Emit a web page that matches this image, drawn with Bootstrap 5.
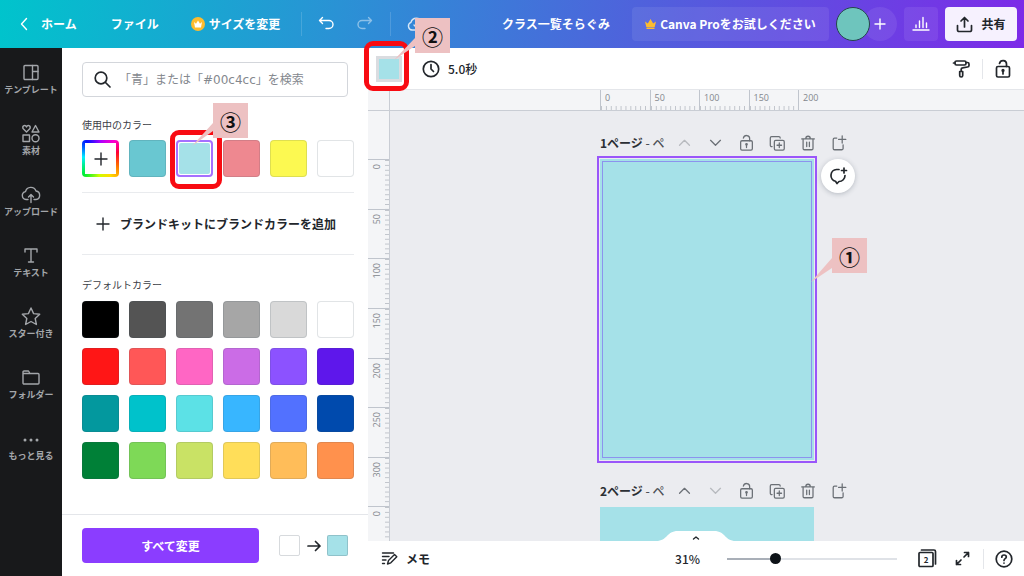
<!DOCTYPE html>
<html lang="ja">
<head>
<meta charset="utf-8">
<meta name="viewport" content="width=device-width, initial-scale=1">
<title>クラス一覧そらぐみ</title>
<link rel="stylesheet" href="https://cdn.jsdelivr.net/npm/bootstrap@5.3.0/dist/css/bootstrap.min.css">
<style>
  :root { --aqua:#a5e1e8; --violet:#8b3dff; --ink:#22262b; --line:#e4e6ea; }
  body { font:12px/16px "Noto Sans CJK JP",sans-serif; color:var(--ink); }
  button { padding:0; border:0; background:none; color:inherit; display:inline-flex; align-items:center; justify-content:center; flex:none; }
  a { color:inherit; text-decoration:none; }
  svg { fill:none; stroke:currentColor; stroke-width:1.4; stroke-linecap:round; stroke-linejoin:round; flex:none; display:block; overflow:visible; }
  svg.solid { stroke:none; }
  svg.thick { stroke-width:1.7; }
  .rule { width:1px; background:var(--line); }

  .topbar { height:48px; background:linear-gradient(100deg,#00c4cc 0%,#2a92d5 33%,#4f62dc 62%,#7d2ae8 100%); color:#fff; padding:0 7px 0 20px; }
  .topbar .rule { height:24px; background:#ffffff26; }
  .home-link { gap:13px; margin-right:34px; }
  .resize-btn { gap:4px; margin:0 21px 0 32px; }
  .redo-btn { opacity:.45; margin:0 17px 0 23px; }
  .pro-btn { height:34px; width:197px; background:#ffffff14; border-radius:4px; gap:4px; margin:0 7px 0 22px; }
  .avatar { width:34px; height:34px; border:1px solid #25444c; border-radius:50%; background:#6ec5bd; z-index:1; }
  .invite-btn { width:34px; height:34px; border-radius:50%; background:#ffffff14; margin:0 7px 0 -7px; }
  .chart-btn { width:34px; height:34px; border-radius:4px; background:#ffffff14; margin-right:7px; }
  .share-btn { width:72px; height:34px; border-radius:4px; background:#f6f1fe; color:var(--ink); gap:8px; }

  .side-nav { width:62px; background:#18191b; color:#a3a6aa; padding-top:15px; }
  .side-nav a { height:61px; font-size:9px; line-height:12px; gap:1px; font-weight:700; white-space:nowrap; }
  .side-nav svg { width:20px; height:20px; }

  .color-panel { width:306px; }
  .panel-body { padding:14px 14px 0 20px; }
  .search-box { height:35px; margin-right:6px; border:1px solid #d3d6db; border-radius:4px; padding:0 11px; gap:8px; }
  .search-box input { border:0; outline:0; width:100%; padding:0; background:none; color:var(--ink); font-family:"DejaVu Sans","Noto Sans CJK JP",sans-serif; }
  .search-box input::placeholder { color:#84888e; opacity:1; }
  .panel-title { font-size:10px; line-height:16px; margin:0; font-weight:400; color:#3c4046; }
  .swatches { display:grid; grid-template-columns:repeat(6,1fr); gap:10px; }
  .swatch { width:100%; height:37px; border-radius:4px; border:1px solid #39475526; background-color:var(--c); position:relative; }
  .swatch.picker { border:0; background:conic-gradient(#a0f,#f0c 40deg,#f03 70deg,#f60 110deg,#fd0 150deg,#cf0 185deg,#0e3 225deg,#0ef 275deg,#01f 320deg,#a0f); }
  .picker span { background:#fff; width:31px; height:31px; }
  .swatch.chosen { border:2px solid #a570ff; padding:1px; background:none; }
  .chosen .fill { width:100%; height:100%; background:var(--aqua); border-radius:2px; }
  .brand-btn { height:63px; gap:10px; font-weight:600; border:solid #e9ebee; border-width:1px 0; margin:15px 0 22px; width:100%; }
  .brand-btn svg { margin-left:-4px; }
  .panel-foot { height:62px; border-top:1px solid var(--line); padding:0 20px; }
  .apply-btn { width:177px; height:35px; background:var(--violet); color:#fff; border-radius:4px; font-weight:700; margin-right:20px; }
  .chip { width:21px; height:21px; border:1px solid #39475533; border-radius:2px; }
  .chip.after { background:var(--aqua); }

  .editor { min-width:0; z-index:2; }
  .toolbar { height:41px; padding:0 11px 0 8px; }
  .toolbar .rule { height:20px; margin:0 10px 0 12px; }
  .page-color { width:26px; height:26px; border:3px solid #dadce0; background:var(--aqua); position:relative; margin-right:20px; }
  .ruler { background:#f4f5f7; color:#83878d; font:9px/12px "Open Sans",sans-serif; }
  .ruler-x { height:22px; border-top:1px solid var(--line); border-bottom:1px solid #c9cdd4; }
  .ruler-y { width:22px; border-right:1px solid #c9cdd4; padding-top:48px; overflow:hidden; }
  .corner { width:22px; border-right:1px solid #c9cdd4; }
  .track-x { width:214px; display:grid; grid-template-columns:repeat(4,1fr) 16px; }
  .track-x span { border-left:1px solid #c0c5cd; padding:2px 0 0 4px; background:linear-gradient(to right,#c0c4cb 1px,transparent 1px) 0 100%/10% 4px repeat-x; }
  .track-x span:last-child { background:none; }
  .track-y { height:397px; display:grid; grid-template-rows:repeat(8,1fr); }
  .track-y span { display:flex; align-items:flex-start; border-top:1px solid #c0c5cd; padding:4px 0 0 3px; background:linear-gradient(#c0c4cb 1px,transparent 1px) 100% 0/4px 10% repeat-y; }
  .track-y b { font-weight:400; writing-mode:vertical-rl; transform:rotate(180deg); }

  .stage { background:#ebecf0; overflow:hidden; padding-top:16px; }
  .sheet-col { width:214px; margin:0 auto; }
  .sheet-head { height:32px; width:max-content; color:#6b7076; }
  .sheet-name { width:66px; white-space:nowrap; font-weight:500; color:#4d5157; margin-right:9px; }
  .sheet-name b { color:#2b2f34; font-weight:700; }
  .sheet-tools { gap:12px; }
  .sheet-tools svg { width:19px; height:18px; }
  .sheet-tools :disabled { opacity:.4; }
  .sheet { background:var(--aqua); height:301px; margin-bottom:15px; position:relative; }
  .sheet.active { outline:2px solid #9a56fa; outline-offset:1px; }
  .guide { position:absolute; inset:2px; border:1px solid #8c93ee; }
  .comment-btn { position:absolute; left:221px; top:0; width:34px; height:34px; border-radius:50%; background:#fff; box-shadow:0 1px 5px #3947554d; }

  .statusbar { height:35px; padding:0 11px 0 13px; position:relative; z-index:1; }
  .statusbar .rule { height:20px; margin-right:11px; }
  .drawer-tab { position:absolute; left:50%; top:-10px; margin-left:-36px; width:72px; height:14px; }
  .zoom { appearance:none; width:170px; height:16px; background:linear-gradient(to right,#a9afb8 28%,#dfe2e7 28%) center/100% 2px no-repeat; margin:0 21px 0 27px; }
  .zoom::-webkit-slider-thumb { appearance:none; width:11px; height:11px; border-radius:50%; background:#0e1318; }
  .full-btn { margin:0 13px 0 19px; }

  .marker { position:absolute; border:5px solid #f80b12; border-radius:9px; pointer-events:none; }
  .callout { position:absolute; width:35px; height:35px; background:#edc1c2; color:#111; font-size:21px; line-height:37px; font-weight:700; text-align:center; z-index:5; }
  .callout svg { position:absolute; left:0; top:0; fill:#edc1c2; stroke:none; width:1px; height:1px; }
</style>
</head>
<body class="vh-100 d-flex flex-column overflow-hidden">

<svg class="d-none">
  <symbol id="up" viewBox="0 0 20 20"><path d="M4.500 12.500 10 7l5.500 5.500"/></symbol>
  <symbol id="down" viewBox="0 0 20 20"><path d="m4.500 7 5.500 5.500L15.500 7"/></symbol>
  <symbol id="lock" viewBox="0 0 20 20"><rect x="3.500" y="7.500" width="13" height="10.500" rx="1.500"/><path d="M6.500 4.500C7.500 .5 13.500 .8 13.500 5v2.500M10 12v3"/><circle cx="10" cy="11.500" r=".8" fill="currentColor"/></symbol>
  <symbol id="copy" viewBox="0 0 20 20"><rect x="6.500" y="7" width="11" height="11" rx="1.500"/><path d="M4 14h-.5A1.500 1.500 0 0 1 2 12.500v-8A1.500 1.500 0 0 1 3.500 3h8A1.500 1.500 0 0 1 13 4.500M12 10v5M9.500 12.500h5"/></symbol>
  <symbol id="trash" viewBox="0 0 20 20"><path d="M2.500 5.500h14M4 5.500v10.500a1.500 1.500 0 0 0 1.500 1.500h8a1.500 1.500 0 0 0 1.500-1.500V5.500M7 5.500c0-4 5-4 5 0M8 9v5M11 9v5"/></symbol>
  <symbol id="add" viewBox="0 0 20 20"><path d="M7 4.500H4.500A1.500 1.500 0 0 0 3 6v10a1.500 1.500 0 0 0 1.500 1.500h8A1.500 1.500 0 0 0 14 16v-4M13 2v8M9 6h8"/></symbol>
</svg>

<header class="topbar d-flex align-items-center fw-bold text-nowrap flex-shrink-0">
  <a href="#" class="home-link d-flex align-items-center"><svg width="8" height="14" viewBox="0 0 8 14"><path d="M6.500 1.500 1.500 7l5 5.500"/></svg>ホーム</a>
  <a href="#">ファイル</a>
  <button class="resize-btn fw-bold"><svg class="solid" width="14" height="14" viewBox="0 0 14 14"><circle cx="7" cy="7" r="7" fill="#fdbc2e"/><path d="M3 5l2 1.700L7 3.500l2 3.200L11 5l-1 5.500H4z" fill="#fff"/></svg>サイズを変更</button>
  <span class="rule"></span>
  <button class="ms-3" aria-label="元に戻す"><svg width="16" height="16" viewBox="0 0 16 16"><path d="M4.500 1.500 1.500 4.500l3 3M1.500 4.500H11a4 4 0 0 1 0 8H8"/></svg></button>
  <button class="redo-btn" aria-label="やり直す"><svg width="16" height="16" viewBox="0 0 16 16"><path d="m11.500 1.500 3 3-3 3M14.500 4.500H5a4 4 0 0 0 0 8h3"/></svg></button>
  <span class="rule"></span>
  <svg class="ms-3" width="20" height="16" viewBox="0 0 20 16" opacity=".8"><path d="M5 14a4 4 0 0 1-1-7.700A5.500 5.500 0 0 1 14.500 6 4 4 0 0 1 15 14zM7 9l2.500 2.500L13 8"/></svg>
  <span class="ms-auto">クラス一覧そらぐみ</span>
  <button class="pro-btn fw-bold"><svg class="solid" width="11" height="10" viewBox="0 0 11 10"><path d="M0 2.500l2.800 2L5.500 0l2.700 4.500 2.800-2L9.700 8H1.300zM1.500 8.500h8V10h-8z" fill="#fdbc2e"/></svg>Canva Proをお試しください</button>
  <span class="avatar"></span>
  <button class="invite-btn" aria-label="招待"><svg width="12" height="12" viewBox="0 0 12 12"><path d="M6 1v10M1 6h10"/></svg></button>
  <button class="chart-btn" aria-label="分析"><svg width="18" height="16" viewBox="0 0 18 16"><path d="M1 14h16M4 11.500V9M7.500 11.500V5M11 11.500V1.500M14.500 11.500V7"/></svg></button>
  <button class="share-btn fw-bold"><svg class="thick" width="17" height="17" viewBox="0 0 17 17"><path d="M1.500 9.500V14A1.500 1.500 0 0 0 3 15.500h11a1.500 1.500 0 0 0 1.500-1.500V9.500M8.500 11V1.500M5 5l3.500-3.500L12 5"/></svg>共有</button>
</header>

<div class="d-flex flex-fill" style="min-height:0">
  <nav class="side-nav d-flex flex-column flex-shrink-0">
    <a href="#" class="d-flex flex-column align-items-center"><svg viewBox="0 0 20 20"><rect x="3" y="2.500" width="14" height="14" rx="1"/><path d="M11.500 2.500v14M11.500 8.500H17"/></svg>テンプレート</a>
    <a href="#" class="d-flex flex-column align-items-center"><svg viewBox="0 0 20 20"><path d="M5.500 8 2 4.500c-1-3 2.500-4 3.500-1.500C6.500.5 10 1.500 9 4.500zM14.500 1.500 18 8h-7z"/><rect x="2" y="11" width="6.500" height="6.500"/><circle cx="14.500" cy="14.200" r="3.500"/></svg>素材</a>
    <a href="#" class="d-flex flex-column align-items-center"><svg viewBox="0 0 20 20"><path d="M7 14.500H5a4 4 0 0 1-.5-7.900A5.500 5.500 0 0 1 15 6a4.300 4.300 0 0 1 0 8.500h-2M10 17.500v-8M7.500 12 10 9.500l2.500 2.500"/></svg>アップロード</a>
    <a href="#" class="d-flex flex-column align-items-center"><svg viewBox="0 0 20 20"><path d="M4 6V3h12v3M10 3v13M7.500 16h5"/></svg>テキスト</a>
    <a href="#" class="d-flex flex-column align-items-center"><svg viewBox="0 0 20 20"><path d="m10 1 2.600 5.600 6.100.7-4.500 4.200 1.200 6-5.400-3-5.400 3 1.200-6-4.500-4.200 6.100-.7z"/></svg>スター付き</a>
    <a href="#" class="d-flex flex-column align-items-center"><svg viewBox="0 0 20 20"><path d="M2 6V4a1 1 0 0 1 1-1h4.500L9 5.500h8a1 1 0 0 1 1 1V15a1 1 0 0 1-1 1H3a1 1 0 0 1-1-1zM2 5.500h7"/></svg>フォルダー</a>
    <a href="#" class="d-flex flex-column align-items-center"><svg viewBox="0 0 20 20"><g fill="currentColor" stroke="none"><circle cx="4" cy="11" r="1.500"/><circle cx="10" cy="11" r="1.500"/><circle cx="16" cy="11" r="1.500"/></g></svg>もっと見る</a>
  </nav>

  <section class="color-panel bg-white d-flex flex-column flex-shrink-0">
    <div class="panel-body flex-fill">
      <label class="search-box d-flex align-items-center">
        <svg class="thick" width="17" height="17" viewBox="0 0 17 17"><circle cx="7" cy="7" r="5.800"/><path d="m11.500 11.500 4.500 4.500"/></svg>
        <input type="search" placeholder="「青」または「#00c4cc」を検索" aria-label="カラーを検索">
      </label>
      <h2 class="panel-title" style="margin:20px 0 7px">使用中のカラー</h2>
      <div class="swatches">
        <button class="swatch picker" aria-label="新しいカラーを追加"><span class="d-flex align-items-center justify-content-center"><svg width="14" height="14" viewBox="0 0 14 14"><path d="M7 1v12M1 7h12"/></svg></span></button>
        <button class="swatch" style="--c:#69c7d1" aria-label="#69c7d1"></button>
        <div class="position-relative">
          <button class="swatch chosen" aria-label="#a5e1e8"><span class="fill"></span></button>
          <span class="marker" style="left:-6px;top:-10px;width:52px;height:59px"></span>
          <span class="callout" style="left:37px;top:-37px"><svg><path d="M0 20-21 43 0 28z"/></svg>③</span>
        </div>
        <button class="swatch" style="--c:#ee8890" aria-label="#ee8890"></button>
        <button class="swatch" style="--c:#fcf951" aria-label="#fcf951"></button>
        <button class="swatch" style="--c:#ffffff" aria-label="#ffffff"></button>
      </div>
      <button class="brand-btn"><svg width="14" height="14" viewBox="0 0 14 14"><path d="M7 1v12M1 7h12"/></svg>ブランドキットにブランドカラーを追加</button>
      <h2 class="panel-title mb-2">デフォルトカラー</h2>
      <div class="swatches">
        <button class="swatch" style="--c:#000000" aria-label="#000000"></button>
        <button class="swatch" style="--c:#545454" aria-label="#545454"></button>
        <button class="swatch" style="--c:#737373" aria-label="#737373"></button>
        <button class="swatch" style="--c:#a6a6a6" aria-label="#a6a6a6"></button>
        <button class="swatch" style="--c:#d9d9d9" aria-label="#d9d9d9"></button>
        <button class="swatch" style="--c:#ffffff" aria-label="#ffffff"></button>
        <button class="swatch" style="--c:#ff1616" aria-label="#ff1616"></button>
        <button class="swatch" style="--c:#ff5757" aria-label="#ff5757"></button>
        <button class="swatch" style="--c:#ff66c4" aria-label="#ff66c4"></button>
        <button class="swatch" style="--c:#cb6ce6" aria-label="#cb6ce6"></button>
        <button class="swatch" style="--c:#8c52ff" aria-label="#8c52ff"></button>
        <button class="swatch" style="--c:#5e17eb" aria-label="#5e17eb"></button>
        <button class="swatch" style="--c:#03989e" aria-label="#03989e"></button>
        <button class="swatch" style="--c:#00c2cb" aria-label="#00c2cb"></button>
        <button class="swatch" style="--c:#5ce1e6" aria-label="#5ce1e6"></button>
        <button class="swatch" style="--c:#38b6ff" aria-label="#38b6ff"></button>
        <button class="swatch" style="--c:#5271ff" aria-label="#5271ff"></button>
        <button class="swatch" style="--c:#004aad" aria-label="#004aad"></button>
        <button class="swatch" style="--c:#008037" aria-label="#008037"></button>
        <button class="swatch" style="--c:#7ed957" aria-label="#7ed957"></button>
        <button class="swatch" style="--c:#c9e265" aria-label="#c9e265"></button>
        <button class="swatch" style="--c:#ffde59" aria-label="#ffde59"></button>
        <button class="swatch" style="--c:#ffbd59" aria-label="#ffbd59"></button>
        <button class="swatch" style="--c:#ff914d" aria-label="#ff914d"></button>
      </div>
    </div>
    <div class="panel-foot d-flex align-items-center">
      <button class="apply-btn">すべて変更</button>
      <span class="chip"></span>
      <svg class="thick mx-auto" width="14" height="12" viewBox="0 0 14 12"><path d="M1 6h12M8.500 1.500 13 6l-4.500 4.500"/></svg>
      <span class="chip after"></span>
    </div>
  </section>

  <main class="editor bg-white d-flex flex-column flex-fill position-relative">
    <div class="toolbar d-flex align-items-center flex-shrink-0">
      <div class="page-color">
        <button class="w-100 h-100 d-block" aria-label="背景色"></button>
        <span class="marker" style="left:-15px;top:-18px;width:45px;height:50px"></span>
        <span class="callout" style="left:36px;top:-41px"><svg><path d="M0 20-21 42 0 28z"/></svg>②</span>
      </div>
      <button class="gap-2 fw-medium"><svg class="thick" width="18" height="18" viewBox="0 0 18 18"><circle cx="9" cy="9" r="7.700"/><path d="M9 4.500V9l2.500 2.500"/></svg>5.0秒</button>
      <button class="ms-auto" aria-label="スタイルをコピー"><svg class="thick" width="18" height="20" viewBox="0 0 18 20"><rect x="3" y="2" width="11" height="4" rx="1.500"/><path d="M3 4H1.500M14 3.500h1.500A1.500 1.500 0 0 1 17 5v1.500A1.500 1.500 0 0 1 15.500 8l-5 .8a1.500 1.500 0 0 0-1.300 1.500V12M7.700 12.500h3v4a1.500 1.500 0 0 1-3 0z"/></svg></button>
      <span class="rule"></span>
      <button aria-label="ロック"><svg class="thick" width="20" height="20"><use href="#lock"/></svg></button>
    </div>

    <div class="ruler ruler-x d-flex flex-shrink-0">
      <div class="corner"></div>
      <div class="flex-fill d-flex justify-content-center">
        <div class="track-x"><span>0</span><span>50</span><span>100</span><span>150</span><span>200</span></div>
      </div>
    </div>

    <div class="d-flex flex-fill" style="min-height:0">
      <div class="ruler ruler-y flex-shrink-0">
        <div class="track-y"><span><b>0</b></span><span><b>50</b></span><span><b>100</b></span><span><b>150</b></span><span><b>200</b></span><span><b>250</b></span><span><b>300</b></span><span><b>0</b></span></div>
      </div>
      <div class="stage flex-fill">
        <div class="sheet-col">
          <div class="sheet-head d-flex align-items-center">
            <div class="sheet-name"><b>1ページ</b> - ペ</div>
            <div class="sheet-tools d-flex">
              <button disabled aria-label="上へ"><svg><use href="#up"/></svg></button>
              <button aria-label="下へ"><svg><use href="#down"/></svg></button>
              <button aria-label="ロック"><svg><use href="#lock"/></svg></button>
              <button aria-label="複製"><svg><use href="#copy"/></svg></button>
              <button aria-label="削除"><svg><use href="#trash"/></svg></button>
              <button aria-label="ページを追加"><svg><use href="#add"/></svg></button>
            </div>
          </div>
          <div class="sheet active">
            <div class="guide"></div>
            <button class="comment-btn" aria-label="コメント"><svg class="thick" width="20" height="20" viewBox="0 0 20 20"><path d="M11 3.500H8.500a6 6 0 0 0-1 11.800L9 17.500l2-2a6 6 0 0 0 6-6M16 2v5M13.500 4.500h5"/></svg></button>
            <span class="callout" style="left:232px;top:79px"><svg><path d="M0 20-21 44 0 30z"/></svg>①</span>
          </div>
          <div class="sheet-head d-flex align-items-center">
            <div class="sheet-name"><b>2ページ</b> - ペ</div>
            <div class="sheet-tools d-flex">
              <button aria-label="上へ"><svg><use href="#up"/></svg></button>
              <button disabled aria-label="下へ"><svg><use href="#down"/></svg></button>
              <button aria-label="ロック"><svg><use href="#lock"/></svg></button>
              <button aria-label="複製"><svg><use href="#copy"/></svg></button>
              <button aria-label="削除"><svg><use href="#trash"/></svg></button>
              <button aria-label="ページを追加"><svg><use href="#add"/></svg></button>
            </div>
          </div>
          <div class="sheet"></div>
        </div>
      </div>
    </div>

    <footer class="statusbar bg-white d-flex align-items-center flex-shrink-0">
      <button class="drawer-tab" aria-label="サムネイルを表示"><svg width="72" height="14" viewBox="0 0 72 14"><path d="M-4 14V10C8 10 6 0 18 0h36c12 0 10 10 22 10v4z" fill="#fff" stroke="none"/><path d="m33.500 8 2.500-2 2.500 2"/></svg></button>
      <button class="gap-2 fw-bold"><svg width="17" height="15" viewBox="0 0 17 15"><path d="M1.500 2h11M1.500 5.500h6.500M1.500 9H5M1.500 12.500h2M6.500 13l1-3.500L13.500 3.500l2.300 2.300-6 6z"/></svg>メモ</button>
      <label for="zoom" class="ms-auto fw-medium">31%</label>
      <input id="zoom" class="zoom" type="range" min="0" max="100" value="27">
      <button aria-label="ページ一覧"><svg class="thick" width="18" height="19" viewBox="0 0 18 19"><rect x="1" y="3.500" width="14" height="14" rx="1"/><path d="M3.500 1H16a1.500 1.500 0 0 1 1.500 1.500V15"/><text x="8" y="13.500" text-anchor="middle" font-size="8" font-weight="700" fill="currentColor" stroke="none">2</text></svg></button>
      <button class="full-btn" aria-label="全画面"><svg class="thick" width="15" height="15" viewBox="0 0 15 15"><path d="M9.500 1.500h4v4M13.500 1.500 9 6M5.500 13.500h-4v-4M1.500 13.500 6 9"/></svg></button>
      <span class="rule"></span>
      <button aria-label="ヘルプ"><svg class="thick" width="18" height="18" viewBox="0 0 18 18"><circle cx="9" cy="9" r="7.800"/><path d="M6.800 7.200c0-3 4.500-2.800 4.500-.2C11.300 8.700 9 8.700 9 10.500M9 13v.1"/></svg></button>
    </footer>
  </main>
</div>

<script src="https://cdn.jsdelivr.net/npm/bootstrap@5.3.0/dist/js/bootstrap.bundle.min.js"></script>
</body>
</html>
